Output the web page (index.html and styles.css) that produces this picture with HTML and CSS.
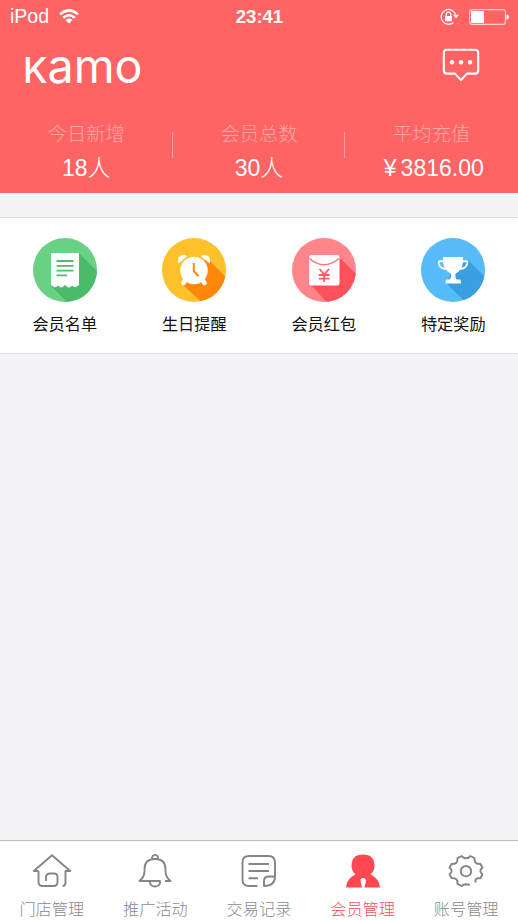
FILE: index.html
```html
<!DOCTYPE html>
<html lang="zh-CN">
<head>
<meta charset="utf-8">
<title>Kamo</title>
<link rel="stylesheet" href="styles.css">
</head>
<body>
<div class="app">
  <header class="header">
    <div class="status">
      <div class="status-left">
        <span>iPod</span>
        <svg width="20" height="15" viewBox="0 0 20 15" fill="none" stroke="#fff" stroke-width="2.5"><path d="M1 5.4Q10-2.6 19 5.4M4.2 8.8Q10 3.8 15.8 8.8"/><path d="M6.5 11Q10 8.2 13.5 11L10 14.6Z" fill="#fff" stroke="none"/></svg>
      </div>
      <span class="clock">23:41</span>
      <div class="status-right">
        <svg width="20" height="18" viewBox="0 0 20 18" fill="none" stroke="#fff"><path d="M13.5 14.4A7.4 7.4 0 1 1 15.6 6.5" stroke-width="1.3"/><path d="M13 6.8H19L16 10.5Z" fill="#fff" stroke="none"/><rect x="5" y="8" width="7" height="5.3" fill="#fff" stroke="none"/><path d="M6.3 8V6.3a2.2 2.2 0 0 1 4.4 0V8" stroke-width="1.3"/></svg>
        <svg width="40" height="16" viewBox="0 0 40 16"><rect x=".6" y=".6" width="35.8" height="14.8" rx="2.5" fill="none" stroke="#ffd0d0" stroke-width="1.1"/><path d="M2 2H15V14H2Z" fill="#fff"/><path d="M37.5 5.3Q40 5.8 40 8T37.5 10.7Z" fill="#fff"/></svg>
      </div>
    </div>
    <div class="brand-row">
      <svg class="logo" width="118" height="30" viewBox="0 0 118 30" role="img" aria-label="Kamo">
        <text x="-2" y="27" textLength="119.500" lengthAdjust="spacingAndGlyphs"><tspan class="logo-cap">K</tspan>amo</text>
      </svg>
      <svg class="chat" width="38" height="34" viewBox="0 0 38 34"><path d="M5 1.8H33Q36.2 1.8 36.2 5V22.4Q36.2 25.6 33 25.6H25L19 32L13 25.6H5Q1.8 25.6 1.8 22.4V5Q1.8 1.8 5 1.8Z" fill="none" stroke="#fff" stroke-width="2.1" stroke-linejoin="round"/><g fill="#fff"><circle cx="10" cy="14.3" r="2.2"/><circle cx="19" cy="14.3" r="2.2"/><circle cx="28" cy="14.3" r="2.2"/></g></svg>
    </div>
    <div class="stats">
      <div class="stat"><span class="stat-label">今日新增</span><span class="stat-value">18人</span></div>
      <div class="stat"><span class="stat-label">会员总数</span><span class="stat-value">30人</span></div>
      <div class="stat"><span class="stat-label">平均充值</span><span class="stat-value"><span class="yen">¥</span>3816.00</span></div>
    </div>
  </header>

  <section class="menu">
    <div class="menu-item">
      <svg width="64" height="64" viewBox="0 0 64 64"><clipPath id="disc"><circle cx="32" cy="32" r="32"/></clipPath><g clip-path="url(#disc)"><path d="M0 0H64V64H0Z" fill="#69d184"/><path d="M46 15L72 41V72H42L18 48Z" fill="#4bbb69"/></g><path d="M18 15H46V47L43 49Q41 50 39 47.5Q37 50 35 49.5L32 47L29 49.5Q27 50 25 47.5Q23 50 21 49L18 47Z" fill="#fff"/><path d="M23.5 23H40.500M23.500 27.800H40.500M23.500 32.600H40.500M23.500 37.400H34" stroke="#4fbd6c" stroke-width="1.8"/></svg>
      <span>会员名单</span>
    </div>
    <div class="menu-item">
      <svg width="64" height="64" viewBox="0 0 64 64"><g clip-path="url(#disc)"><path d="M0 0H64V64H0Z" fill="#fec12c"/><path d="M45 20L74 49V74H50L20 46Z" fill="#ff870b"/></g><g fill="#fff"><circle cx="32" cy="32.500" r="13.700"/><path d="M16.500 25.500Q14.500 20 18.500 17.800Q22.500 15.800 25 18.200ZM47.500 25.500Q49.500 20 45.500 17.800Q41.500 15.800 39 18.200Z"/></g><path d="M24 41L21.500 45M40 41L42.500 45" stroke="#fff" stroke-width="4.500" stroke-linecap="round"/><path d="M31.800 25V33L36.300 38" fill="none" stroke="#ff870b" stroke-width="2"/></svg>
      <span>生日提醒</span>
    </div>
    <div class="menu-item">
      <svg width="64" height="64" viewBox="0 0 64 64"><g clip-path="url(#disc)"><path d="M0 0H64V64H0Z" fill="#ff858a"/><path d="M46 18L74 46V74H44L18 46Z" fill="#ff505b"/></g><rect x="17" y="17" width="30.500" height="30.500" rx="2.500" fill="#fff"/><path d="M17.500 20.500Q32 33 47 20.500" fill="none" stroke="#ff747c" stroke-width="1.600"/><path d="M27.500 31L32.200 36.500L37 31M32.200 36.500V44M26.800 37H37.600M26.800 40.700H37.600" fill="none" stroke="#ff5964" stroke-width="1.800"/></svg>
      <span>会员红包</span>
    </div>
    <div class="menu-item">
      <svg width="64" height="64" viewBox="0 0 64 64"><g clip-path="url(#disc)"><path d="M0 0H64V64H0Z" fill="#57bbfa"/><path d="M47 22L74 49V74H55L25 45L33 30Z" fill="#3a9fdf"/></g><path d="M22 19H42V24Q41 33 34.500 35.500Q34 40 35.500 41.500H38.500Q40 41.800 40 45.500H24.500Q24.500 41.800 26 41.500H28.500Q30.500 40 30 35.500Q23 33 22 24Z" fill="#fff"/><path d="M23 23.300H18.500Q17.400 23.300 17.800 25.500Q19 30.800 25 30.800M41 23.300H45.500Q46.600 23.300 46.200 25.500Q45 30.800 39 30.800" fill="none" stroke="#fff" stroke-width="1.900"/></svg>
      <span>特定奖励</span>
    </div>
  </section>

  <nav class="tabs">
    <div class="tab">
      <svg width="40" height="36" viewBox="0 0 40 36"><path d="M6.500 18H1.800L20 2.200L38.200 18H33.500V29Q33.500 33 30.500 33M6.500 18V29Q6.500 33 10.500 33H21.500Q25.500 33 25.500 29V24Q25.500 20.500 22 20.500H18Q14 20.500 14 24V28"/></svg>
      <span>门店管理</span>
    </div>
    <div class="tab">
      <svg width="40" height="36" viewBox="0 0 40 36"><path d="M17.300 6.200A3 3 0 1 1 22.700 6.200M15 28H4.500Q9.500 24 9.500 18V16Q9.500 6 20 6T30.500 16V18Q30.500 24 35.500 28H30M15 28H25V29.500Q24.500 33.500 20 33.500T15 29.500Z"/></svg>
      <span>推广活动</span>
    </div>
    <div class="tab">
      <svg width="40" height="36" viewBox="0 0 40 36"><path d="M18.500 33H10Q3.500 33 3.500 26.500V9.500Q3.500 3 10 3H29.500Q36 3 36 9.500V23.500Q36 33 25 33V28Q25 23.500 30 23.500H36M9.500 11H30M9.500 18H30M9.500 25.300H19"/></svg>
      <span>交易记录</span>
    </div>
    <div class="tab active">
      <svg width="40" height="36" viewBox="0 0 40 36"><path d="M3 34.500Q3 30 6 26.500Q8 24 12.500 21.300Q8.500 18 8.500 13Q8.500 1.500 20 1.500T31.500 13Q31.500 18 27.500 21.300Q32 24 34 26.500Q37 30 37 34.500H21.500L23 28Q23 25 20 25T17.500 28L19 34.500Z"/></svg>
      <span>会员管理</span>
    </div>
    <div class="tab">
      <svg width="40" height="36" viewBox="0 0 40 36"><path d="M29.700 29.500Q28.800 26.300 30.600 25.600Q32 25.200 34.500 25L36.500 21.200C33.600 19.300 33.600 16.700 36.500 14.800L34.500 11C29.800 11 28.200 9.500 28.500 5.200L24.300 3C22.300 6 17.700 6 15.700 3L11.500 5.200C11.800 9.500 10.200 11 5.500 11L3.500 14.800C6.400 16.700 6.400 19.300 3.500 21.200L5.500 25C10.200 25 11.800 26.500 11.500 30.800L15.700 33Q18.700 30 23.800 32"/><circle cx="20" cy="18.200" r="5.200"/></svg>
      <span>账号管理</span>
    </div>
  </nav>
</div>
</body>
</html>
```

FILE: styles.css
```css
* { box-sizing: border-box; }

body {
  margin: 0;
  font-family: "Liberation Sans", "Noto Sans CJK SC", sans-serif;
  background: #f3f3f8;
}

svg { display: block; flex: none; }

.app {
  display: flex;
  flex-direction: column;
  height: 920px;
}

.header {
  height: 193px;
  background: #ff6464;
  color: #fff;
}

.status {
  display: grid;
  grid-template-columns: 1fr auto 1fr;
  align-items: center;
  height: 33px;
  padding: 0 9px 0 10px;
}

.status-left,
.status-right {
  display: flex;
  align-items: center;
  gap: 10px;
  font-size: 19.5px;
}

.status-right { justify-content: flex-end; gap: 9px; }

.clock { font-size: 18.5px; font-weight: bold; }

.brand-row {
  display: flex;
  justify-content: space-between;
  height: 83px;
  padding: 14px 38px 0 25px;
}

.logo { margin-top: 9px; overflow: visible; }
.logo text { fill: #fff; font-family: Inter, sans-serif; font-size: 47px; font-weight: 400; }
.logo .logo-cap { font-size: 36px; font-weight: 500; }

.chat { margin-top: 1px; }

.stats {
  display: grid;
  grid-template-columns: repeat(3, 1fr);
}

.stat {
  display: flex;
  flex-direction: column;
  align-items: center;
  height: 77px;
  padding-top: 5px;
  background: linear-gradient(#ffa1a1, #ffa1a1) right 16px / 1px 26px no-repeat;
}

.stat:last-child { background: none; }

.stat-label {
  height: 27px;
  line-height: 28px;
  font-size: 19.3px;
  font-weight: 300;
  color: #ffa8a8;
}

.stat-value {
  height: 40px;
  line-height: 40px;
  font-size: 23px;
  font-weight: 300;
}

.yen {
  display: inline-block;
  width: 21px;
  text-align: center;
}

.menu {
  display: grid;
  grid-template-columns: repeat(4, 1fr);
  height: 137px;
  margin-top: 24px;
  padding-top: 20px;
  background: #fff;
  border-top: 1px solid #dcdce0;
  border-bottom: 1px solid #dcdce0;
}

.menu-item {
  display: flex;
  flex-direction: column;
  align-items: center;
  font-size: 16.2px;
  line-height: 24px;
  color: #111;
}

.menu-item span { margin-top: 10px; }

.tabs {
  display: grid;
  grid-template-columns: repeat(5, 1fr);
  height: 80px;
  margin-top: auto;
  padding-top: 12px;
  background: #fff;
  border-top: 1px solid #bdbdbf;
}

.tab {
  display: flex;
  flex-direction: column;
  align-items: center;
  font-size: 16.2px;
  font-weight: 300;
  line-height: 24px;
  color: #8a8a8a;
}

.tab svg { fill: none; stroke: #858585; stroke-width: 1.9; stroke-linejoin: round; }
.tab span { margin-top: 8px; }
.tab.active { color: #f8505a; }
.tab.active svg { fill: #ff4852; stroke: none; }
```
